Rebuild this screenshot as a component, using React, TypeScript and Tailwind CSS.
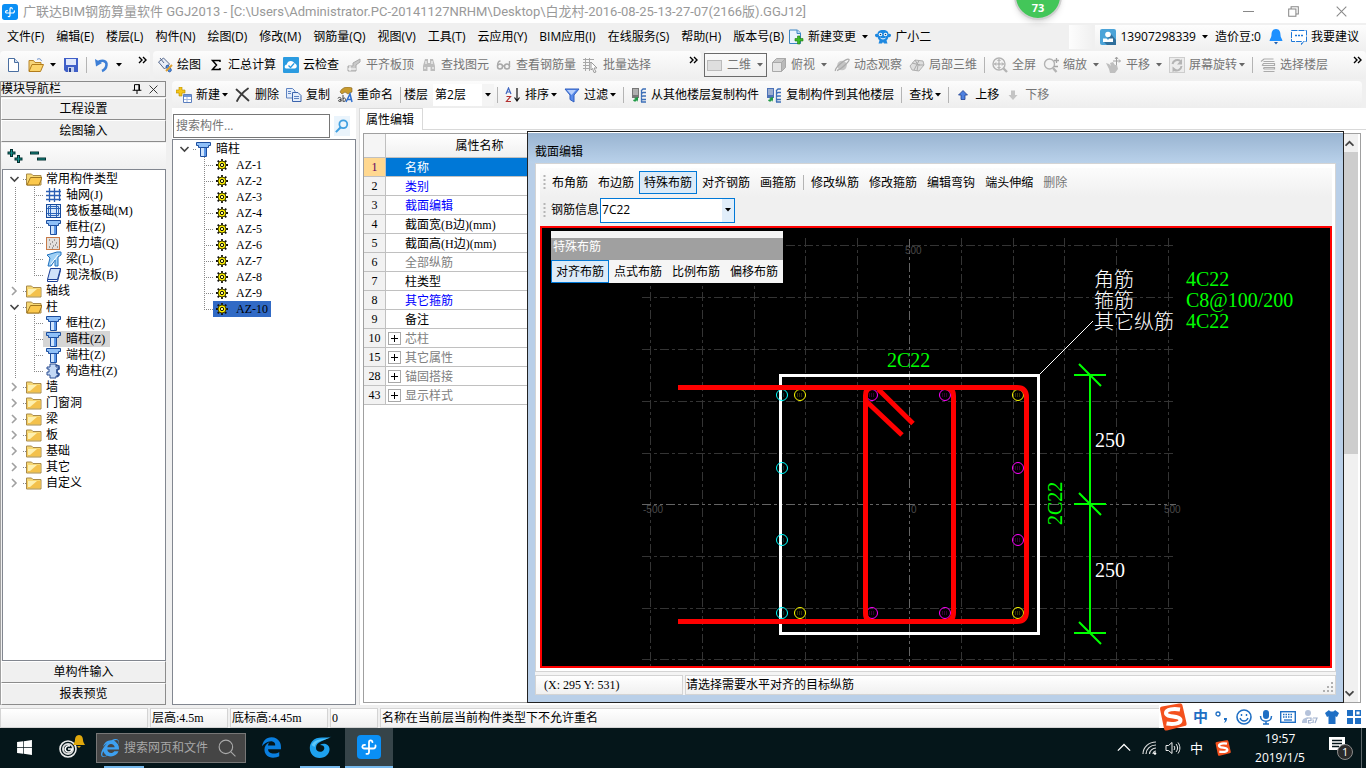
import type { ReactNode } from "react";
import { FaEdgeLegacy, FaInternetExplorer, FaWindows } from "react-icons/fa";

const UI_FONT = "font-['Open_Sans','Noto_Sans_CJK_SC',sans-serif]";
const SONG_FONT = "font-['Liberation_Serif','Noto_Sans_CJK_SC',serif]";

/* ---------- icons ---------- */

const Ico = ({ children, size = 16 }: { children: ReactNode; size?: number }) => (
  <svg
    width={size}
    height={size}
    viewBox="0 0 16 16"
    fill="none"
    className="shrink-0"
    aria-hidden="true"
  >
    {children}
  </svg>
);

const Caret = ({ muted = false }: { muted?: boolean }) => (
  <svg width="6" height="4" viewBox="0 0 6 4" className="shrink-0" aria-hidden="true">
    <path d="M0 0h6L3 3.5z" fill={muted ? "#666" : "#000"} />
  </svg>
);

const More = () => (
  <svg width="9" height="8" viewBox="0 0 9 8" fill="none" className="shrink-0" aria-hidden="true">
    <path d="M1 1l3 3-3 3M5 1l3 3-3 3" stroke="#000" strokeWidth="1.4" />
  </svg>
);

const LogoIcon = ({ size }: { size: number }) => (
  <svg width={size} height={size} viewBox="0 0 24 24" fill="none" className="shrink-0" aria-hidden="true">
    <rect width="24" height="24" rx="4" fill="#0a8ff5" />
    <path
      d="M15.500 7.200C15 4.800 12 4.800 12 7.500v9.500c0 1.600-1.200 2.200-2.600 1.800M8 10C4.800 9.600 4.300 13.500 7.500 13.500H16c2 0 2.800-1.300 2.500-3.200"
      stroke="#fff"
      strokeWidth="1.8"
      strokeLinecap="round"
    />
  </svg>
);

const NewDocIcon = () => (
  <Ico>
    <path d="M3.500 1.500h6l4 4v9h-10z" fill="#fff" stroke="#4a6ea0" />
    <path d="M9.500 1.500v4h4" fill="#cfe0f5" stroke="#4a6ea0" />
  </Ico>
);

const OpenIcon = () => (
  <Ico>
    <path d="M1 14V3.500h4.500l1.500 2h6V8" fill="#f6d57a" stroke="#b9862a" />
    <path d="M1 14.500L4 7.500h11.500l-3 7z" fill="#fbd46b" stroke="#b27c1c" />
    <path d="M9 2.500c2-1.500 4-.5 4.500 1.500" stroke="#5d84c4" />
  </Ico>
);

const SaveIcon = () => (
  <Ico>
    <path d="M1 1h14v14H3l-2-2z" fill="#3f5fc8" />
    <path d="M3 2h10v6H3z" fill="#dfe7fb" />
    <path d="M5 10h6v5H5z" fill="#c5d0ee" />
    <path d="M6 11h2v4H6z" fill="#24408f" />
  </Ico>
);

const UndoIcon = () => (
  <Ico>
    <path d="M3 6c5-4 10-2 9.500 2-.3 2.800-2 5-4.500 6" stroke="#3d7fd6" strokeWidth="2.500" />
    <path d="M1 2l1 7.500L8 6z" fill="#3d7fd6" />
  </Ico>
);

const PaintIcon = () => (
  <Ico>
    <path d="M1.500 5l5-4 6 6-5 5z" fill="#e8edf7" stroke="#54678c" />
    <path d="M3 1l4 5" stroke="#54678c" />
    <path d="M11 8l3 4c1 2-1 4-3 2L9 9z" fill="#4b8be0" stroke="#2f5fa8" />
    <path d="M9 14l6-6" stroke="#e0a030" strokeWidth="2" />
  </Ico>
);

const SigmaIcon = () => (
  <Ico>
    <path d="M12 5V3.500H4.500L8.500 8l-4 4.500H12V11" stroke="#000" strokeWidth="1.500" />
  </Ico>
);

const CloudCheckIcon = () => (
  <Ico>
    <rect width="16" height="16" rx="1" fill="#2b9be0" />
    <path d="M3 11.500c-2-.5-1.500-4 .8-4C4.500 3 10.500 3 11.500 6.500c3 .3 3 5 .2 5z" fill="#fff" />
    <path d="M5.500 8.500l2 2 3.500-4" stroke="#2b9be0" strokeWidth="1.300" />
  </Ico>
);

const SlabTopIcon = () => (
  <Ico>
    <path d="M2 14V9h5V6l7-4v3l-4 3v6z" fill="#c9c9c9" stroke="#aaa" />
    <path d="M2 12h8M4 9v5" stroke="#fff" />
  </Ico>
);

const BinocularsIcon = () => (
  <Ico>
    <path d="M4 2h3v4h2V2h3l2 7v5H9.500v-4h-3v4H2V9z" fill="#bdbdbd" />
    <path d="M3 11h2M11 11h2M5 4v3M11 4v3" stroke="#fff" />
  </Ico>
);

const GlassesIcon = () => (
  <Ico>
    <circle cx="4" cy="9.500" r="2.500" stroke="#a8a8a8" strokeWidth="1.500" />
    <circle cx="11" cy="9.500" r="2.500" stroke="#a8a8a8" strokeWidth="1.500" />
    <path d="M1.500 9c0-3 1-5 3-5M13.500 9.500V4M6.500 9h2" stroke="#a8a8a8" strokeWidth="1.300" />
  </Ico>
);

const BatchIcon = () => (
  <Ico>
    <path d="M0 2.500h11M0 5.500h9M0 8.500h7M0 11.500h7M2.500 1v13M6.500 1v13" stroke="#a8a8a8" />
    <path d="M8 5l6 6h-3l2 4-2 .5-1.500-4L8 13z" fill="#fff" stroke="#999" />
  </Ico>
);

const PlaneIcon = () => (
  <Ico>
    <rect x=".5" y="3.500" width="14" height="10" fill="#dedede" stroke="#bbb" />
  </Ico>
);

const CubeIcon = () => (
  <Ico>
    <path d="M1.500 5.500h9v9h-9z" fill="#e5e5e5" stroke="#a9a9a9" />
    <path d="M1.500 5.500l4-4h9l-4 4z" fill="#c9c9c9" stroke="#a9a9a9" />
    <path d="M14.500 1.500v9l-4 4v-9z" fill="#b9b9b9" stroke="#a9a9a9" />
  </Ico>
);

const OrbitIcon = () => (
  <Ico>
    <circle cx="8" cy="8.500" r="4.800" fill="#c4c4c4" />
    <path d="M1.500 14C0 11 13 0 15 2.500 16 4.500 6 13 3 13.500" stroke="#aaa" strokeWidth="1.300" />
  </Ico>
);

const PartialCubeIcon = () => (
  <Ico>
    <path d="M1 9l5-6 8 1 1 4-5 6-7-1z" fill="#dedede" stroke="#b0b0b0" />
    <path d="M6 3l3 5 6 0M9 8l-1 6M3 6l8 2M10 3.500L5 13" stroke="#aaa" />
  </Ico>
);

const FullscreenIcon = () => (
  <Ico>
    <circle cx="7" cy="7" r="6" fill="#f4f4f4" stroke="#b3b3b3" strokeWidth="1.400" />
    <path d="M7 2.500v9M2.500 7h9M5.500 4L7 2.500 8.500 4M5.500 10L7 11.500 8.500 10M4 5.500L2.500 7 4 8.500M10 5.500L11.500 7 10 8.500" stroke="#a5a5a5" />
    <path d="M11.500 11.500L15 15" stroke="#b3b3b3" strokeWidth="2.400" />
  </Ico>
);

const ZoomIcon = () => (
  <Ico>
    <circle cx="6.500" cy="7" r="5" fill="#f4f4f4" stroke="#b3b3b3" strokeWidth="1.400" />
    <path d="M10 11l3.500 4" stroke="#b3b3b3" strokeWidth="2.400" />
    <path d="M13.500 1v5M11 3.500h5M11 9.500h4" stroke="#a5a5a5" strokeWidth="1.300" />
  </Ico>
);

const PanIcon = () => (
  <Ico>
    <path d="M0 6l3 1 2 2-1-3 3-1 2 3 2 0 1 4-3 4H4l-1-4z" fill="#bfbfbf" />
    <path d="M10.500 0v8M7 4h7M9 2l1.500-2L12 2M13 2.500L14.500 4 13 5.500" stroke="#a0a0a0" />
  </Ico>
);

const RotateIcon = () => (
  <Ico>
    <rect x=".5" y=".5" width="15" height="15" fill="#ececec" stroke="#cdcdcd" />
    <path d="M3.500 7a5 5 0 018-3M12.500 9a5 5 0 01-7 4" stroke="#b4b4b4" strokeWidth="2" />
    <path d="M13 2v5.500H8zM3.500 15V9.500L8 13z" fill="#b4b4b4" />
  </Ico>
);

const FloorsIcon = () => (
  <Ico>
    <path d="M1 4.500l3-2.500h9.500M3.500 4.500h11M2 8.500l1.500-2h11v2h-12M3.500 12l.5-1.500h10.500v1.500h-11M3.500 14.500h11" stroke="#ababab" strokeWidth="1.200" />
  </Ico>
);

const AddItemIcon = () => (
  <Ico>
    <path d="M3 0h3v3h3v3H6v3H3V6H0V3h3z" fill="#f5c518" stroke="#b38a00" strokeWidth=".6" />
    <path d="M7.500 7.500h8v8h-8z" fill="#fff" stroke="#5b7fbf" />
    <path d="M8 8h7v2H8z" fill="#6f95d8" />
    <path d="M8 12.500h7M11 10v5" stroke="#9fb6e0" />
  </Ico>
);

const DeleteIcon = () => (
  <Ico>
    <path d="M1.500 2.500l12 11M13 1.500C8 5 4 10 2 14" stroke="#3c3c3c" strokeWidth="1.800" strokeLinecap="round" />
  </Ico>
);

const CopyIcon = () => (
  <Ico>
    <path d="M.5 1.500h6l2.500 2.500v7H.5z" fill="#e3edfb" stroke="#5e83c1" />
    <path d="M6.500 5.500h5.500l3 3v6H6.500z" fill="#e3edfb" stroke="#3b64ad" />
    <path d="M2 4.500h3M2 6.500h3M8 9.500h5M8 11.500h5" stroke="#5e83c1" />
  </Ico>
);

const RenameIcon = () => (
  <Ico>
    <path d="M3 5c2-5 8-6 12-4v4l-4 2-3-2-3 2z" fill="#c89b2f" stroke="#806020" strokeWidth=".6" />
    <path d="M1 11.500c0-1.500 3-1.500 3 0v3M4 12.500c-3 0-3 2-1.500 2S4 14 4 13M6 8v6.500M6 12c1-2 3-.5 2.500 1S7 15 6 14" stroke="#333" strokeWidth=".9" />
    <path d="M9 15l4-8 2 8M10.500 12.500h4" stroke="#2f6fd0" strokeWidth="1.500" />
  </Ico>
);

const SortIcon = () => (
  <Ico>
    <path d="M1 7l2.500-6L6 7M2 5h3" stroke="#3f66c0" strokeWidth="1.200" />
    <path d="M1.500 9.500h4l-4 5h4.500" stroke="#b23030" strokeWidth="1.200" />
    <path d="M12 1v12M9.500 10.500L12 14l2.500-3.500" stroke="#111" strokeWidth="1.200" />
  </Ico>
);

const FilterIcon = () => (
  <Ico>
    <path d="M1 2h14l-5 6v7l-4-2.500V8z" fill="#5a8bea" stroke="#2f5fc0" />
    <path d="M3 3h9L7.500 8" fill="#b9d0fb" />
  </Ico>
);

const CopyFloorIcon = ({ flip = false }: { flip?: boolean }) => (
  <Ico>
    <path d="M1 1h7v10H1z" fill={flip ? "#4c72b8" : "#777"} />
    <path d="M2 3h5M2 5h5M2 7h5" stroke="#e8e8e8" />
    <path d="M2 13c1 2 3 2 4 0l1 2V10l-4 1 1.500 1z" fill="#1f9a46" />
    <path d="M10 4l2-2h3M10 7l2-1.500h3M10 10l2-1h3M10 13l2-.5h3M10.500 4v11M15 15h-5" stroke="#3d6fb8" strokeWidth="1.300" />
  </Ico>
);

const ArrowIcon = ({ down = false }: { down?: boolean }) => (
  <svg width="10" height="10" viewBox="0 0 10 10" className="shrink-0" aria-hidden="true">
    {down ? (
      <path d="M5 10L.5 5H3V.5h4V5h2.500z" fill="#c4c4c4" />
    ) : (
      <path d="M5 .5L9.500 5H7v4.500H3V5H.5z" fill="#4d80e0" stroke="#1f3f90" strokeWidth=".8" />
    )}
  </svg>
);

const NewChangeIcon = () => (
  <Ico>
    <path d="M1.500 1h8l3 3v10.500h-11z" fill="#eaf3fd" stroke="#3d87c4" />
    <path d="M9 1v3.500h3.500" fill="#bcd9f3" stroke="#3d87c4" />
    <path d="M9.500 7h2.500v2.500h3V12h-3v3H9.500v-3H7V9.500h2.500z" fill="#3dbb28" stroke="#1d7d10" strokeWidth=".6" />
  </Ico>
);

const MascotIcon = () => (
  <Ico>
    <path d="M8 1c4 0 5.500 2 5.500 4 2-.5 2.500.5 2.500 1.500S15 8.500 13.500 8c-.5 2-1.500 3-2 3.500l1 3H9l-1-1.500-1 1.500H3.500l1-3C4 11 3 10 2.500 8 1 8.500 0 7.500 0 6.500S.5 4.500 2.500 5c0-2 1.500-4 5.500-4z" fill="#1e88e0" />
    <circle cx="5.500" cy="5.500" r="1.800" fill="#fff" />
    <circle cx="10.500" cy="5.500" r="1.800" fill="#fff" />
    <circle cx="5.500" cy="5.500" r=".8" fill="#0b3d70" />
    <circle cx="10.500" cy="5.500" r=".8" fill="#0b3d70" />
    <path d="M5.500 9c1.500 1.200 3.500 1.200 5 0" stroke="#fff" />
  </Ico>
);

const UserIcon = () => (
  <Ico>
    <rect width="16" height="16" rx="2" fill="#4ba3d8" />
    <path d="M11 5l5 6v5H7l-3-3z" fill="#2f6f9c" />
    <circle cx="8" cy="5.500" r="2.800" fill="#fff" />
    <path d="M3 9.500h10v3.500H3z" fill="#fff" />
    <path d="M6.500 9l1.500 2 1.500-2" fill="#3f95cc" />
  </Ico>
);

const BellIcon = () => (
  <Ico>
    <path d="M8 0c3.500 0 4.500 3 4.500 6 0 2.500 1.500 3.500 2 6h-13c.5-2.500 2-3.500 2-6 0-3 1-6 4.500-6z" fill="#1e90ff" />
    <path d="M6 13h4l-2 2.500z" fill="#1e5fb0" />
  </Ico>
);

const SuggestIcon = () => (
  <Ico>
    <path d="M.5 1.500h15v11h-3l-2 3v-3H.5z" fill="#fff" stroke="#1e78d8" strokeDasharray="6 1" />
    <path d="M4 6.500h2M7 6.500h2M10 6.500h2" stroke="#1e78d8" strokeWidth="1.500" />
  </Ico>
);

const FolderIcon = ({ open = false }: { open?: boolean }) => (
  <Ico>
    <path d="M.5 3h5l1.500 1.500h8v9.500H.5z" fill="#f7d873" stroke="#a88a4a" />
    {open ? (
      <path d="M1 14L4.500 6.500H16L13 14z" fill="#fbc84c" stroke="#a0761e" />
    ) : (
      <path d="M1.500 6h13v7h-13z" fill="#f3c14c" />
    )}
    {!open && <path d="M2 6h9L4 12H2z" fill="#fdf0b0" />}
  </Ico>
);

const ColumnIcon = () => (
  <Ico>
    <path d="M.5 1.500h14v3h-2v2h-10v-2h-2z" fill="#8fc0f8" stroke="#1d4e9e" />
    <path d="M4.500 6.500h6v9h-6z" fill="#cfe4fc" stroke="#1d4e9e" />
    <path d="M8 7h2v8H8z" fill="#5b97e8" />
  </Ico>
);

const AxisIcon = () => (
  <Ico>
    <path d="M3.500 1v14M8.500 1v14M13.500 2v12M0 4.500h15M0 8.500h15M0 12.500h15" stroke="#2c5fb4" strokeWidth="1.300" />
  </Ico>
);

const RaftIcon = () => (
  <Ico>
    <rect x=".5" y="1.500" width="14" height="13" fill="#d6e8fb" stroke="#174a9c" />
    <path d="M4.500 5.500h6v5h-6zM2.500 3.500h10v9h-10zM4.500 2v12M10.500 2v12M1 5.500h13M1 10.500h13" stroke="#2c64b8" />
  </Ico>
);

const WallIcon = () => (
  <Ico>
    <rect x=".5" y="2.500" width="13" height="12" fill="#e4e1dd" stroke="#c87a48" />
    <path d="M3 5h1M6 7h1M4 9h1M8 5h1M10 8h1M3 12h1M7 11h1M11 12h1M9 10h1M6 13h1" stroke="#555" />
  </Ico>
);

const BeamIcon = () => (
  <Ico>
    <path d="M1 4l10-3h4v3l-3 2v9H9V9l-4 6H2l2-8z" fill="#9fd0f5" stroke="#1f70bd" />
    <path d="M5 13l7-9" stroke="#fff" />
  </Ico>
);

const SlabIcon = () => (
  <Ico>
    <path d="M4.500 1.500h10l-3 11H1.500z" fill="#cfe1fa" stroke="#1b3f96" />
    <path d="M1.500 12.500v2h10l3-11v-2" stroke="#1b3f96" />
  </Ico>
);

const StructColumnIcon = () => (
  <Ico>
    <path d="M4 1h6v3h3v2h-2v4h2v3h-3v2H4v-3H1V9h2V6H1V4h3z" fill="#c3d8f5" stroke="#2d4f92" />
    <path d="M10 2l3 1v3l-2 1v3l2 1-2 3" stroke="#2d4f92" strokeWidth="1.500" />
  </Ico>
);

const GearIcon = () => (
  <svg width="12" height="12" viewBox="0 0 12 12" fill="none" className="shrink-0" aria-hidden="true">
    <path d="M6 0v12M0 6h12M1.700 1.700l8.600 8.600M10.300 1.700l-8.600 8.600" stroke="#111" strokeWidth="1.800" />
    <circle cx="6" cy="6" r="4" fill="#fff200" stroke="#4a4600" />
    <circle cx="6" cy="6" r="1.700" fill="#fffb90" stroke="#111" />
  </svg>
);

const SogouIcon = ({ size }: { size: number }) => (
  <svg width={size} height={size} viewBox="0 0 28 28" fill="none" className="shrink-0" aria-hidden="true">
    <path d="M1 6c0-2 1-2 2-2.400L20 .5c2-.3 3 0 3.500 2L27.500 20c.4 2-.3 2.700-2 3L8 27.500c-2 .4-2.600-.3-3-2z" fill="#f4511e" />
    <path d="M21 6.500c-6-1-14-.5-14 3.500 0 5 14 2 14.500 7 .3 4-8 4.500-14 3.500" stroke="#fff" strokeWidth="4" />
  </svg>
);

/* ---------- top bars ---------- */

const menus = [
  "文件(F)",
  "编辑(E)",
  "楼层(L)",
  "构件(N)",
  "绘图(D)",
  "修改(M)",
  "钢筋量(Q)",
  "视图(V)",
  "工具(T)",
  "云应用(Y)",
  "BIM应用(I)",
  "在线服务(S)",
  "帮助(H)",
  "版本号(B)",
];

type ToolProps = {
  icon?: ReactNode;
  label?: string;
  caret?: boolean;
  muted?: boolean;
  tight?: boolean;
};

const Tool = ({ icon, label, caret, muted, tight }: ToolProps) => (
  <button
    type="button"
    className={`flex items-center whitespace-nowrap ${muted ? "text-[#757575]" : "text-black"}`}
  >
    {icon}
    {label && <span className={icon ? "ml-1" : ""}>{label}</span>}
    {caret && (
      <span className={tight ? "ml-0.5" : "ml-1.5"}>
        <Caret muted={muted} />
      </span>
    )}
  </button>
);

const Sep = () => <span className="h-4 w-px shrink-0 bg-[#b4b4b4]" />;

const TitleBar = () => (
  <header className="flex h-[23px] shrink-0 items-center bg-white pl-0.5 text-[#999999]">
    <LogoIcon size={16} />
    <h1 className="ml-[5px] font-['Roboto','Noto_Sans_CJK_SC',sans-serif] text-[13px] whitespace-nowrap">
      广联达BIM钢筋算量软件 GGJ2013 - [C:\Users\Administrator.PC-20141127NRHM\Desktop\白龙村-2016-08-25-13-27-07(2166版).GGJ12]
    </h1>
    <div className="ml-auto flex items-center">
      <button type="button" aria-label="最小化" className="flex w-[45px] justify-center">
        <Ico size={11}>
          <path d="M0 8h16" stroke="#888" strokeWidth="1.500" />
        </Ico>
      </button>
      <button type="button" aria-label="还原" className="flex w-[45px] justify-center">
        <Ico size={11}>
          <path d="M1 4.500h10.500V15H1zM4.500 4V1H15v10.500h-3.500" stroke="#888" strokeWidth="1.500" />
        </Ico>
      </button>
      <button type="button" aria-label="关闭" className="flex w-[50px] justify-center">
        <Ico size={11}>
          <path d="M1 1l14 14M15 1L1 15" stroke="#888" strokeWidth="1.500" />
        </Ico>
      </button>
    </div>
  </header>
);

const MenuBar = () => (
  <nav className="flex h-7 shrink-0 items-center bg-[#f0f0f0] pl-[7px]">
    <div className="flex items-center gap-3">
      {menus.map((m) => (
        <button key={m} type="button" className="whitespace-nowrap">
          {m}
        </button>
      ))}
    </div>
    <div className="ml-1 flex items-center gap-[7px]">
      <Tool icon={<NewChangeIcon />} label="新建变更" caret />
      <Tool icon={<MascotIcon />} label="广小二" />
    </div>
    <div className="ml-auto h-6 w-6 bg-gradient-to-r from-[#fdfdfd] to-[#f0f0f0]" />
    <div className="ml-0.5 flex h-6 items-center gap-[7px] bg-gradient-to-b from-[#fdfdfd] to-[#f0f0f0] pr-[7px] pl-[5px]">
      <Tool icon={<UserIcon />} label="13907298339" caret />
      <Tool label="造价豆:0" />
      <Tool icon={<BellIcon />} />
      <Tool icon={<SuggestIcon />} label="我要建议" />
    </div>
  </nav>
);

const band = "flex h-7 items-center gap-[7px] rounded-sm bg-gradient-to-b from-[#fcfcfc] to-[#eeeeee]";

const MainToolbar = () => (
  <div className="flex h-7 shrink-0 items-center gap-[3px] bg-[#f0f0f0]">
    <div className={`${band} w-[150px] pr-[3px] pl-[5px]`}>
      <Tool icon={<NewDocIcon />} />
      <Tool icon={<OpenIcon />} caret />
      <Tool icon={<SaveIcon />} />
      <Sep />
      <Tool icon={<UndoIcon />} caret />
      <span className="mb-2.5 ml-auto">
        <More />
      </span>
    </div>
    <div className={`${band} w-[548px] pr-[3px] pl-1`}>
      <Tool icon={<PaintIcon />} label="绘图" />
      <Tool icon={<SigmaIcon />} label="汇总计算" />
      <Tool icon={<CloudCheckIcon />} label="云检查" />
      <Tool icon={<SlabTopIcon />} label="平齐板顶" muted />
      <Tool icon={<BinocularsIcon />} label="查找图元" muted />
      <Tool icon={<GlassesIcon />} label="查看钢筋量" muted />
      <Tool icon={<BatchIcon />} label="批量选择" muted />
      <span className="mb-2.5 ml-auto">
        <More />
      </span>
    </div>
    <div className={`${band} flex-1 pr-1`}>
      <div className="-mr-[3px] flex h-6 w-[63px] items-center border border-[#6b6b6b] pl-0.5">
        <Tool icon={<PlaneIcon />} label="二维" caret muted />
      </div>
      <Tool icon={<CubeIcon />} label="俯视" caret muted />
      <Tool icon={<OrbitIcon />} label="动态观察" muted />
      <Tool icon={<PartialCubeIcon />} label="局部三维" muted />
      <Sep />
      <Tool icon={<FullscreenIcon />} label="全屏" muted />
      <Tool icon={<ZoomIcon />} label="缩放" caret muted />
      <Tool icon={<PanIcon />} label="平移" caret muted />
      <Tool icon={<RotateIcon />} label="屏幕旋转" caret muted tight />
      <Sep />
      <Tool icon={<FloorsIcon />} label="选择楼层" muted />
      <span className="mb-2.5 ml-auto">
        <More />
      </span>
    </div>
  </div>
);

const ComponentToolbar = () => (
  <div className="mr-1 flex h-[27px] shrink-0 items-center gap-[7px] rounded-sm bg-gradient-to-b from-[#fcfcfc] to-[#eeeeee] pl-1">
    <Tool icon={<AddItemIcon />} label="新建" caret tight />
    <Tool icon={<DeleteIcon />} label="删除" />
    <Tool icon={<CopyIcon />} label="复制" />
    <Tool icon={<RenameIcon />} label="重命名" />
    <span className="flex items-center gap-[3px]">
      <Sep />
      <label htmlFor="floor" className="whitespace-nowrap">
        楼层
      </label>
      <span className="relative ml-0.5 flex items-center">
        <select id="floor" className="h-[22px] w-[61px] appearance-none bg-white pl-0.5 leading-5">
          <option>第2层</option>
        </select>
        <span className="pointer-events-none absolute right-0 flex h-[22px] w-3 items-center justify-center bg-[#f4f4f4]">
          <Caret />
        </span>
      </span>
      <Sep />
    </span>
    <Tool icon={<SortIcon />} label="排序" caret tight />
    <Tool icon={<FilterIcon />} label="过滤" caret tight />
    <Sep />
    <Tool icon={<CopyFloorIcon />} label="从其他楼层复制构件" />
    <Tool icon={<CopyFloorIcon flip />} label="复制构件到其他楼层" />
    <Sep />
    <Tool label="查找" caret tight />
    <Sep />
    <button type="button" className="flex items-center gap-[7px] pl-0.5 whitespace-nowrap">
      <ArrowIcon />
      上移
    </button>
    <button type="button" className="flex items-center gap-[7px] pl-0.5 whitespace-nowrap text-[#757575]">
      <ArrowIcon down />
      下移
    </button>
  </div>
);

/* ---------- module navigator ---------- */

const TreeGuide = ({ last }: { last: boolean }) => (
  <svg width="40" height="16" viewBox="0 0 40 16" className="shrink-0" aria-hidden="true">
    <path
      d={last ? "M12.500 0v16M31.500 0v8M31 8.500h9" : "M12.500 0v16M31.500 0v16M31 8.500h9"}
      stroke="#888"
      strokeDasharray="1 1"
      fill="none"
    />
  </svg>
);

const TreeToggle = ({ open }: { open: boolean }) => (
  <svg width="23" height="16" viewBox="0 0 23 16" fill="none" className="shrink-0" aria-hidden="true">
    {open ? (
      <path d="M7.500 6l4 4 4-4" stroke="#444" strokeWidth="1.600" />
    ) : (
      <path d="M9 4l4 4-4 4" stroke="#a0a0a0" strokeWidth="1.600" />
    )}
    <path d="M20 8.500h3" stroke="#888" strokeDasharray="1 1" />
  </svg>
);

const moduleTree = [
  {
    name: "常用构件类型",
    children: [
      { name: "轴网(J)", icon: AxisIcon },
      { name: "筏板基础(M)", icon: RaftIcon },
      { name: "框柱(Z)", icon: ColumnIcon },
      { name: "剪力墙(Q)", icon: WallIcon },
      { name: "梁(L)", icon: BeamIcon },
      { name: "现浇板(B)", icon: SlabIcon },
    ],
  },
  { name: "轴线" },
  {
    name: "柱",
    children: [
      { name: "框柱(Z)", icon: ColumnIcon },
      { name: "暗柱(Z)", icon: ColumnIcon, active: true },
      { name: "端柱(Z)", icon: ColumnIcon },
      { name: "构造柱(Z)", icon: StructColumnIcon },
    ],
  },
  { name: "墙" },
  { name: "门窗洞" },
  { name: "梁" },
  { name: "板" },
  { name: "基础" },
  { name: "其它" },
  { name: "自定义" },
];

const NavButton = ({ children }: { children: ReactNode }) => (
  <button
    type="button"
    className="h-[22px] w-full shrink-0 border border-t-white border-r-[#8c8c8c] border-b-[#8c8c8c] border-l-white bg-[#f0f0f0] text-center"
  >
    {children}
  </button>
);

const ModuleNav = () => (
  <aside className={`flex w-[166px] shrink-0 flex-col border-l border-[#a0a0a0] ${SONG_FONT}`}>
    <div className="mb-px flex h-4 shrink-0 items-center border border-l-0 border-[#8a8a8a] pr-1">
      <h2>模块导航栏</h2>
      <button type="button" aria-label="自动隐藏" className="ml-auto flex w-4 justify-center">
        <Ico size={10}>
          <path d="M4 1h8v9M4 1v9M1 10h14M8 10v6M11 1v9" stroke="#000" strokeWidth="1.600" />
        </Ico>
      </button>
      <button type="button" aria-label="关闭" className="flex w-4 justify-center">
        <Ico size={9}>
          <path d="M1 1l14 14M15 1L1 15" stroke="#222" strokeWidth="1.600" />
        </Ico>
      </button>
    </div>
    <NavButton>工程设置</NavButton>
    <NavButton>绘图输入</NavButton>
    <div className="mt-px flex h-[26px] shrink-0 items-center gap-[7px] bg-gradient-to-b from-[#fcfcfc] to-[#f0f0f0] pl-1.5">
      <button type="button" aria-label="全部展开">
        <Ico>
          <path d="M4.500 1v8M.5 5h8M11.500 7v8M7.500 11h8" stroke="#053030" strokeWidth="3" />
          <path d="M4.500 2v6M1.500 5h6M11.500 8v6M8.500 11h6" stroke="#17908a" />
        </Ico>
      </button>
      <button type="button" aria-label="全部折叠">
        <Ico>
          <path d="M0 5h9M7 11h9" stroke="#053030" strokeWidth="3" />
          <path d="M1 5h7M8 11h7" stroke="#17908a" />
        </Ico>
      </button>
    </div>
    <ul className="ml-px min-h-0 flex-1 overflow-hidden border border-[#828790] bg-white pt-px leading-4">
      {moduleTree.map((group) => (
        <li key={group.name}>
          <div className="flex h-4 items-center whitespace-nowrap">
            <TreeToggle open={!!group.children} />
            <FolderIcon open={!!group.children} />
            <span className="ml-1">{group.name}</span>
          </div>
          {group.children && (
            <ul>
              {group.children.map((child, index) => {
                const Icon = child.icon;
                return (
                  <li key={child.name} className="flex h-4 items-center whitespace-nowrap">
                    <TreeGuide last={index === group.children.length - 1} />
                    <span
                      className={`flex items-center pr-[5px] pl-[3px] ${"active" in child ? "bg-[#d6d6d6]" : ""}`}
                    >
                      <Icon />
                      <span className="ml-1">{child.name}</span>
                    </span>
                  </li>
                );
              })}
            </ul>
          )}
        </li>
      ))}
    </ul>
    <NavButton>单构件输入</NavButton>
    <NavButton>报表预览</NavButton>
  </aside>
);

/* ---------- component list ---------- */

const components = ["AZ-1", "AZ-2", "AZ-3", "AZ-4", "AZ-5", "AZ-6", "AZ-7", "AZ-8", "AZ-9", "AZ-10"];

const ComponentList = () => (
  <section className="flex w-[184px] shrink-0 flex-col bg-white pt-1">
    <div className="flex h-[27px] shrink-0 items-center">
      <input
        type="text"
        aria-label="搜索构件"
        placeholder="搜索构件..."
        className="ml-px h-6 w-[157px] border border-[#767676] bg-white pl-0.5 placeholder:text-[#757575]"
      />
      <button type="button" aria-label="搜索" className="ml-1 flex h-5 w-4 items-center justify-center bg-[#eaf4fc]">
        <Ico size={14}>
          <circle cx="9.500" cy="6" r="4.500" stroke="#3f9fe0" strokeWidth="2" />
          <path d="M6.500 9.500L1 15" stroke="#3f9fe0" strokeWidth="2.400" />
        </Ico>
      </button>
    </div>
    <div className={`min-h-0 flex-1 overflow-hidden border border-[#828790] pt-px leading-4 ${SONG_FONT}`}>
      <div className="flex h-4 items-center">
        <TreeToggle open />
        <ColumnIcon />
        <span className="ml-1">暗柱</span>
      </div>
      <ul>
        {components.map((name, index) => (
          <li key={name} className="flex h-4 items-center">
            <svg width="40" height="16" viewBox="0 0 40 16" className="shrink-0" aria-hidden="true">
              <path
                d={index === components.length - 1 ? "M31.500 0v8M31 8.500h9" : "M31.500 0v16M31 8.500h9"}
                stroke="#888"
                strokeDasharray="1 1"
                fill="none"
              />
            </svg>
            <span
              className={`flex h-4 items-center gap-2 px-[3px] ${name === "AZ-10" ? "bg-[#316ac5]" : ""}`}
            >
              <GearIcon />
              {name}
            </span>
          </li>
        ))}
      </ul>
    </div>
  </section>
);

/* ---------- property grid ---------- */

const properties = [
  { no: 1, name: "名称", tone: "text-white", selected: true },
  { no: 2, name: "类别", tone: "text-[#0000ff]" },
  { no: 3, name: "截面编辑", tone: "text-[#0000ff]" },
  { no: 4, name: "截面宽(B边)(mm)", tone: "text-black" },
  { no: 5, name: "截面高(H边)(mm)", tone: "text-black" },
  { no: 6, name: "全部纵筋", tone: "text-[#808080]" },
  { no: 7, name: "柱类型", tone: "text-black" },
  { no: 8, name: "其它箍筋", tone: "text-[#0000ff]" },
  { no: 9, name: "备注", tone: "text-black" },
  { no: 10, name: "芯柱", tone: "text-[#808080]", group: true },
  { no: 15, name: "其它属性", tone: "text-[#808080]", group: true },
  { no: 28, name: "锚固搭接", tone: "text-[#808080]", group: true },
  { no: 43, name: "显示样式", tone: "text-[#808080]", group: true },
];

const PropertyTable = () => (
  <table className={`w-full table-fixed border-separate border-spacing-0 ${SONG_FONT}`}>
    <colgroup>
      <col className="w-[22px]" />
      <col className="w-[188px]" />
      <col />
    </colgroup>
    <thead>
      <tr className="h-6">
        <th className="border-r border-b border-[#c0c0c0] bg-[#f5f5f5] p-0" />
        <th className="border-r border-b border-[#c0c0c0] bg-gradient-to-b from-white to-[#f0f0f0] p-0 font-normal">
          属性名称
        </th>
        <th className="border-b border-[#c0c0c0] bg-[#f5f5f5] p-0" />
      </tr>
    </thead>
    <tbody>
      {properties.map((p) => (
        <tr key={p.no} className="h-[19px]">
          <td
            className={`border-r border-b border-[#c0c0c0] p-0 text-center leading-4 ${
              p.selected ? "bg-[#ffd890] text-[#600060]" : "bg-[#f2f2f2] text-black"
            }`}
          >
            {p.no}
          </td>
          <td
            className={`border-r border-b border-[#c0c0c0] p-0 leading-4 ${p.tone} ${
              p.selected ? "bg-[#0078d7]" : "bg-white"
            }`}
          >
            <span className="flex items-center pt-px">
              <span className="flex w-[19px] pl-0.5">
                {p.group && (
                  <svg width="13" height="13" viewBox="0 0 13 13" fill="none" aria-hidden="true">
                    <rect x=".5" y=".5" width="12" height="12" stroke="#a8a8a8" fill="#fff" />
                    <path d="M3 6.500h7M6.500 3v7" stroke="#000" />
                  </svg>
                )}
              </span>
              {p.name}
            </span>
          </td>
          <td className="border-b border-[#c0c0c0] bg-white p-0" />
        </tr>
      ))}
    </tbody>
  </table>
);

/* ---------- section drawing ---------- */

// Drawing origin is the centre of the column section; one grid step is 100 mm.
const gridX = [-259, -207, -155, -104, -52, 52, 104, 155, 207, 259];
const gridY = [-259, -207, -155, -103, -51, 52, 104, 155];

const bars = [
  { x: -127, y: -109, color: "#00ffff" },
  { x: -127, y: -36, color: "#00ffff" },
  { x: -127, y: 36, color: "#00ffff" },
  { x: -127, y: 109, color: "#00ffff" },
  { x: -109, y: -109, color: "#ffff00" },
  { x: -109, y: 109, color: "#ffff00" },
  { x: 109, y: -109, color: "#ffff00" },
  { x: 109, y: 109, color: "#ffff00" },
  { x: -37, y: -109, color: "#ff00ff" },
  { x: -37, y: 109, color: "#ff00ff" },
  { x: 36, y: -109, color: "#ff00ff" },
  { x: 36, y: 109, color: "#ff00ff" },
  { x: 109, y: -36, color: "#ff00ff" },
  { x: 109, y: 36, color: "#ff00ff" },
];

const SectionCanvas = () => (
  <svg className={`block h-full w-full text-[20px] ${SONG_FONT}`} role="img" aria-label="柱截面">
    <g transform="translate(367 276)" fill="none">
      <g stroke="#343434" strokeDasharray="9 3 3 3">
        {gridX.map((x) => (
          <path key={x} d={`M${x + 0.5} -266V162`} />
        ))}
        {gridY.map((y) => (
          <path key={y} d={`M-267 ${y + 0.5}H267`} />
        ))}
      </g>
      <path d="M.5-265V162M-267 .5H267" stroke="#646464" strokeDasharray="9 3 3 3 3 3" />
      <g fill="#4a4a4a" className="font-['Liberation_Sans',sans-serif] text-[10px]">
        <text x="-4" y="-250">500</text>
        <text x="-266" y="9">-500</text>
        <text x="2" y="9">0</text>
        <text x="255" y="9">500</text>
      </g>

      <rect x="-128.500" y="-128.500" width="258" height="258" stroke="#fff" strokeWidth="3" />
      {bars.map((b) => (
        <g key={`${b.x},${b.y}`} stroke={b.color}>
          <circle cx={b.x} cy={b.y} r="5.500" />
          <path d={`M${b.x - 3} ${b.y - 1}h6M${b.x - 3} ${b.y + 1}h6`} strokeDasharray="1 1" opacity=".4" />
        </g>
      ))}
      <g stroke="#f00" strokeWidth="5">
        <path d="M-231-116.500H108q9.500 0 9.500 10V107q0 10.500-9.500 10.500H-231" />
        <path d="M-36-116.500q-7.500 0-7.500 8V109q0 8.500 7.500 8.500H36q8.500 0 8.500-9V-108q0-8.500-8.500-8.500" />
        <path d="M-43-103L-7-69M-31-115L4-80.500" />
      </g>

      <g stroke="#0f0" strokeWidth="2">
        <path d="M181-129V129" />
        <path d="M165-129h32M165 0h32M165 129h32" />
        <path d="M170-140l22 22M170-11l22 22M170 118l22 22" />
      </g>
      <path d="M131-130l53-53" stroke="#fff" />

      <g fill="#0f0">
        <text x="-22" y="-137">2C22</text>
        <text transform="translate(153 21) rotate(-90)">2C22</text>
        <text x="277" y="-218">4C22</text>
        <text x="277" y="-197">C8@100/200</text>
        <text x="277" y="-176">4C22</text>
      </g>
      <g fill="#fff" className="font-light">
        <text x="185" y="-217">角筋</text>
        <text x="185" y="-196">箍筋</text>
        <text x="185" y="-175">其它纵筋</text>
        <text x="186" y="-57">250</text>
        <text x="186" y="73">250</text>
      </g>
    </g>
  </svg>
);

/* ---------- section editor window ---------- */

const DialogTool = ({ label, active, muted }: { label: string; active?: boolean; muted?: boolean }) => (
  <button
    type="button"
    className={`h-[23px] border px-1 whitespace-nowrap ${
      active ? "border-[#0078d7] bg-[#dcebf8]" : "border-transparent"
    } ${muted ? "text-[#757575]" : "text-black"}`}
  >
    {label}
  </button>
);

const Grip = () => (
  <svg width="3" height="15" viewBox="0 0 3 15" className="mr-px shrink-0" aria-hidden="true">
    <path d="M1.500 0v15" stroke="#b5b5b5" strokeWidth="2" strokeDasharray="2 2" />
  </svg>
);

const SectionDialog = () => (
  <section className="absolute top-[3px] right-[22px] bottom-0.5 left-[167px] flex flex-col border border-[#222] bg-[#b9cfe8]">
    <div className="flex h-[31px] shrink-0 items-center border-t border-white bg-gradient-to-b from-[#99b4d1] to-[#b9d1ea] pt-2 pl-[7px]">
      <h2>截面编辑</h2>
    </div>
    <div className="mx-[7px] flex min-h-0 flex-1 flex-col border border-[#d4d4d4] bg-white pt-1 pr-[3px] pb-[3px] pl-1">
      <div className="flex h-[29px] shrink-0 items-center bg-gradient-to-b from-[#fcfcfc] to-[#f0f0f0] pl-[3px]">
        <Grip />
        <DialogTool label="布角筋" />
        <DialogTool label="布边筋" />
        <DialogTool label="特殊布筋" active />
        <DialogTool label="对齐钢筋" />
        <DialogTool label="画箍筋" />
        <span className="mx-0.5">
          <span className="block h-[15px] w-px bg-[#b4b4b4]" />
        </span>
        <DialogTool label="修改纵筋" />
        <DialogTool label="修改箍筋" />
        <DialogTool label="编辑弯钩" />
        <DialogTool label="端头伸缩" />
        <DialogTool label="删除" muted />
      </div>
      <div className="flex h-[29px] shrink-0 items-center bg-[#f0f0f0] pb-[3px] pl-[3px]">
        <Grip />
        <label htmlFor="rebar" className="ml-1 whitespace-nowrap">
          钢筋信息
        </label>
        <span className="relative ml-px flex items-center">
          <select
            id="rebar"
            className="h-[25px] w-[135px] appearance-none border border-[#0078d7] bg-white pl-px leading-5"
          >
            <option>7C22</option>
          </select>
          <span className="pointer-events-none absolute right-px flex h-[23px] w-3 items-center justify-center bg-[#e1eefa]">
            <Caret />
          </span>
        </span>
      </div>
      <div className="relative min-h-0 flex-1 border-2 border-[#ff0000] bg-black">
        <SectionCanvas />
        <div className="absolute top-[3px] left-[9px] w-[232px] bg-[#f5f5f5] pt-[7px]">
          <div className="flex h-[22px] items-center bg-[#a0a0a0] pb-1 pl-0.5 text-white">特殊布筋</div>
          <div className="flex">
            <DialogTool label="对齐布筋" active />
            <DialogTool label="点式布筋" />
            <DialogTool label="比例布筋" />
            <DialogTool label="偏移布筋" />
          </div>
        </div>
      </div>
    </div>
    <div className={`mx-[7px] mb-[7px] flex h-[23px] shrink-0 gap-0.5 bg-[#f4f4f4] pt-[3px] ${SONG_FONT}`}>
      <p className="flex w-[148px] items-center border border-[#d4d4d4] bg-gradient-to-b from-white to-[#f0f0f0] pl-2">
        (X: 295 Y: 531)
      </p>
      <p className="flex flex-1 items-center border border-[#d4d4d4] bg-gradient-to-b from-white to-[#f0f0f0]">
        请选择需要水平对齐的目标纵筋
        <svg width="11" height="11" viewBox="0 0 11 11" className="mt-auto mr-px mb-px ml-auto" aria-hidden="true">
          <path d="M8 0h2v2H8zM4 4h2v2H4zM8 4h2v2H8zM0 8h2v2H0zM4 8h2v2H4zM8 8h2v2H8z" fill="#b0b0b0" />
        </svg>
      </p>
    </div>
  </section>
);

const PropertyPanel = () => (
  <section className="relative ml-[3px] flex min-w-0 flex-1 flex-col border-l border-[#d9d9d9] bg-white">
    <div className="flex h-[22px] shrink-0">
      <h2 className={`w-[63px] border-t border-r border-[#d9d9d9] pt-px pl-1.5 leading-5 whitespace-nowrap ${SONG_FONT}`}>
        属性编辑
      </h2>
      <span className="flex-1 border-b border-[#d9d9d9]" />
    </div>
    <div className="relative mr-[5px] mb-0.5 ml-[3px] flex min-h-0 flex-1 pt-[3px]">
      <div className="flex min-w-0 flex-1 border border-[#a0a0a0]">
        <div className="min-w-0 flex-1 overflow-hidden">
          <PropertyTable />
        </div>
        <div className="mr-0.5 flex w-[17px] shrink-0 flex-col bg-[#f0f0f0]">
          <span className="flex h-[18px] shrink-0 items-center justify-center">
            <Ico size={9}>
              <path d="M1 12l7-7 7 7" stroke="#444" strokeWidth="3" />
            </Ico>
          </span>
          <span className="h-[302px] shrink bg-[#cdcdcd]" />
          <span className="mt-auto flex h-[18px] shrink-0 items-center justify-center">
            <Ico size={9}>
              <path d="M1 4l7 7 7-7" stroke="#444" strokeWidth="3" />
            </Ico>
          </span>
        </div>
      </div>
    </div>
    <div className="absolute inset-x-0 top-5 bottom-0">
      <SectionDialog />
    </div>
  </section>
);

/* ---------- bottom bars ---------- */

const cell = "flex items-center border border-[#d4d4d4] bg-gradient-to-b from-white to-[#f0f0f0] pl-px whitespace-nowrap";

const ImeBar = () => (
  <div className="absolute right-0 bottom-0 flex h-[23px] items-center gap-1.5 bg-white pr-1 text-[#1f6fc4]">
    <SogouIcon size={28} />
    <span className="text-[15px] font-bold">中</span>
    <Ico>
      <circle cx="4" cy="5" r="2" stroke="#1f6fc4" strokeWidth="1.300" />
      <path d="M10 9h3c0 3-1 4-3 5 .8-1.500 1-2 1-3h-1z" fill="#1f6fc4" />
    </Ico>
    <Ico>
      <circle cx="8" cy="8" r="7" stroke="#1f6fc4" strokeWidth="1.600" />
      <path d="M5.500 5v2M10.500 5v2M4 9c1.500 4 6.500 4 8 0" stroke="#1f6fc4" strokeWidth="1.400" />
    </Ico>
    <Ico>
      <rect x="5" y="1" width="6" height="9" rx="3" fill="#1f6fc4" />
      <path d="M2.500 7c0 7 11 7 11 0M8 12v3M5 15h6" stroke="#1f6fc4" strokeWidth="1.500" />
    </Ico>
    <Ico>
      <rect x=".7" y="2.700" width="14.600" height="10.600" stroke="#1f6fc4" strokeWidth="1.400" />
      <path d="M3 5.500h10M3 8h10" stroke="#1f6fc4" strokeWidth="1.500" strokeDasharray="1.500 1" />
      <path d="M4 11h8" stroke="#1f6fc4" strokeWidth="1.300" />
    </Ico>
    <Ico>
      <circle cx="6" cy="4" r="3" fill="#b4c2da" />
      <path d="M0 13c0-6 12-6 12-2v3H0z" fill="#b4c2da" />
      <path d="M6 9h3v2.500H6.500V14H9M11 9h4l-2 5" stroke="#fff" strokeWidth="3" />
      <path d="M6 9h3v2.500H6.500V14H9M11 9h4l-2 5" stroke="#9fb0cc" strokeWidth="1.200" />
    </Ico>
    <Ico>
      <path d="M1 4l4-3c1 2 5 2 6 0l4 3-2 4-1.500-.8V15h-7V7.200L3 8z" fill="#1f6fc4" />
    </Ico>
    <Ico>
      <path d="M1 1h6v6H1zM1 9h6v6H1zM9 9h6v6H9z" fill="#1f6fc4" />
      <path d="M9.700 1.700h4.600v4.600H9.700z" stroke="#1f6fc4" strokeWidth="1.400" />
    </Ico>
  </div>
);

const StatusBar = () => (
  <footer className={`relative flex h-5 shrink-0 gap-0.5 bg-[#f0f0f0] ${SONG_FONT}`}>
    <span className={`${cell} w-[148px]`} />
    <span className={`${cell} w-[78px]`}>层高:4.5m</span>
    <span className={`${cell} w-[98px]`}>底标高:4.45m</span>
    <span className={`${cell} w-12`}>0</span>
    <span className={`${cell} flex-1`}>名称在当前层当前构件类型下不允许重名</span>
    <ImeBar />
  </footer>
);

const TaskButton = ({ label, running, active, children }: {
  label: string;
  running?: boolean;
  active?: boolean;
  children: ReactNode;
}) => (
  <button
    type="button"
    aria-label={label}
    className={`flex h-10 w-12 flex-col items-center ${active ? "bg-[#364449]" : ""}`}
  >
    <span className="flex flex-1 items-center">{children}</span>
    <span className={`h-0.5 ${active ? "w-12" : "w-10"} ${running || active ? "bg-[#76b9ed]" : ""}`} />
  </button>
);

const Taskbar = () => (
  <div className="flex h-10 shrink-0 items-center bg-[#05161a] text-white">
    <TaskButton label="开始">
      <FaWindows size={17} />
    </TaskButton>
    <TaskButton label="通知助手">
      <svg width="26" height="26" viewBox="0 0 26 26" fill="none" aria-hidden="true">
        <circle cx="9" cy="15" r="8" stroke="#eee" strokeWidth="1.600" />
        <circle cx="9" cy="15" r="5" stroke="#ddd" strokeWidth="2" />
        <path d="M9 15h4c0 3-4 4-6 2s0-6 4-5" stroke="#fff" strokeWidth="1.500" />
        <path d="M20 1c3 0 4 3 4 5s1 3 2 5H14c1-2 2-3 2-5s1-5 4-5z" fill="#e0a80c" />
        <path d="M18 12h4l-2 2z" fill="#e0a80c" />
      </svg>
    </TaskButton>
    <div className="mr-px flex h-10 w-[150px] flex-col pt-[5px]">
      <div className="flex h-[30px] items-center border border-[#777] bg-[#454545] px-1">
        <FaInternetExplorer size={18} color="#3da0f0" className="shrink-0" />
        <input
          type="text"
          aria-label="搜索网页和文件"
          placeholder="搜索网页和文件"
          className="ml-[5px] w-[94px] bg-transparent placeholder:text-[#a8a8a8]"
        />
        <Ico size={18}>
          <circle cx="7" cy="7" r="6" stroke="#aaa" />
          <path d="M11.500 11.500L15.500 15.500" stroke="#aaa" />
        </Ico>
      </div>
      <span className="mt-auto ml-2 h-0.5 w-10 bg-[#76b9ed]" />
    </div>
    <div className="flex gap-px">
      <TaskButton label="Edge">
        <FaEdgeLegacy size={21} color="#0a7fe0" />
      </TaskButton>
      <TaskButton label="浏览器" running>
        <svg width="24" height="24" viewBox="0 0 24 24" fill="none" aria-hidden="true">
          <path
            d="M23.500 1.500C19 4 9 0 4 6.500-1 13 3 23 11.500 23 18 23 22 18.500 21.500 13.500 21 9 15.500 7.500 12 10c3.500 0 5 2 4 4.500-1.500 3.500-8 3-8-1.500C8 6.500 16 6 23.500 1.500z"
            fill="#1ea2f0"
          />
          <path d="M3.500 10C7 3 15 5 22 2.500 15 6 8 5.500 6.500 12z" fill="#5cc8fb" />
        </svg>
      </TaskButton>
      <TaskButton label="GGJ2013" active>
        <LogoIcon size={24} />
      </TaskButton>
    </div>

    <div className="ml-auto flex items-center gap-[7px]">
      <Ico size={14}>
        <path d="M1 11l7-7 7 7" stroke="#fff" strokeWidth="1.500" />
      </Ico>
      <span className="ml-1">
        <Ico>
          <path d="M1 14C1 7 7 2 14 2M4 14c0-5 4.500-9 10-9M7.500 14c0-3 3-6 6.500-6M11 14c0-1.500 1.500-3 3-3" stroke="#ddd" strokeWidth="1.200" />
          <circle cx="13" cy="13.500" r="1.300" fill="#fff" />
        </Ico>
      </span>
      <Ico>
        <path d="M1 5.500h2.500L7 2.500v11L3.500 10.500H1zM9 6c1 1.500 1 2.500 0 4M11 4c2 2.500 2 5.500 0 8M13 2.500c2.500 3.500 2.500 7.500 0 11" stroke="#eee" />
      </Ico>
      <span className="ml-0.5 text-[13px]">中</span>
      <span className="ml-[5px]">
        <SogouIcon size={16} />
      </span>
      <p className="ml-1.5 w-[72px] text-center leading-[19px]">
        19:57
        <br />
        2019/1/5
      </p>
      <button type="button" aria-label="操作中心" className="mr-[7px] ml-[5px] flex">
        <svg width="26" height="26" viewBox="0 0 26 26" fill="none" aria-hidden="true">
          <path d="M1 2h16v13h-5v3l-3-3H1z" fill="#fff" />
          <path d="M4 5.500h10M4 8.500h10M4 11.500h7" stroke="#05161a" strokeWidth="1.300" />
          <circle cx="17" cy="17" r="7.500" fill="#2b2b2b" stroke="#8c8c8c" />
          <text x="14" y="21" fill="#fff" className="text-[11px]">
            1
          </text>
        </svg>
      </button>
    </div>
    <span className="h-10 w-[5px] border-l border-[#5c666a]" />
  </div>
);

const App = () => {
  return (
    <div
      className={`relative flex h-screen flex-col overflow-hidden bg-[#f0f0f0] text-[12px] leading-4 text-black ${UI_FONT}`}
    >
      <TitleBar />
      <MenuBar />
      <MainToolbar />
      <main className="mb-[3px] flex min-h-0 flex-1 gap-1.5 pt-0.5">
        <ModuleNav />
        <div className="flex min-w-0 flex-1 flex-col">
          <ComponentToolbar />
          <div className="flex min-h-0 flex-1">
            <ComponentList />
            <PropertyPanel />
          </div>
        </div>
      </main>
      <StatusBar />
      <Taskbar />

      {/* floating speed ball */}
      <div className="absolute -top-7 right-[304px] flex h-12 w-12 items-end justify-center rounded-full border-2 border-[#d0d0d0] bg-[#43c659] pb-0.5 text-[11px] font-bold text-white shadow-md">
        73
      </div>
    </div>
  );
};

export default App;
